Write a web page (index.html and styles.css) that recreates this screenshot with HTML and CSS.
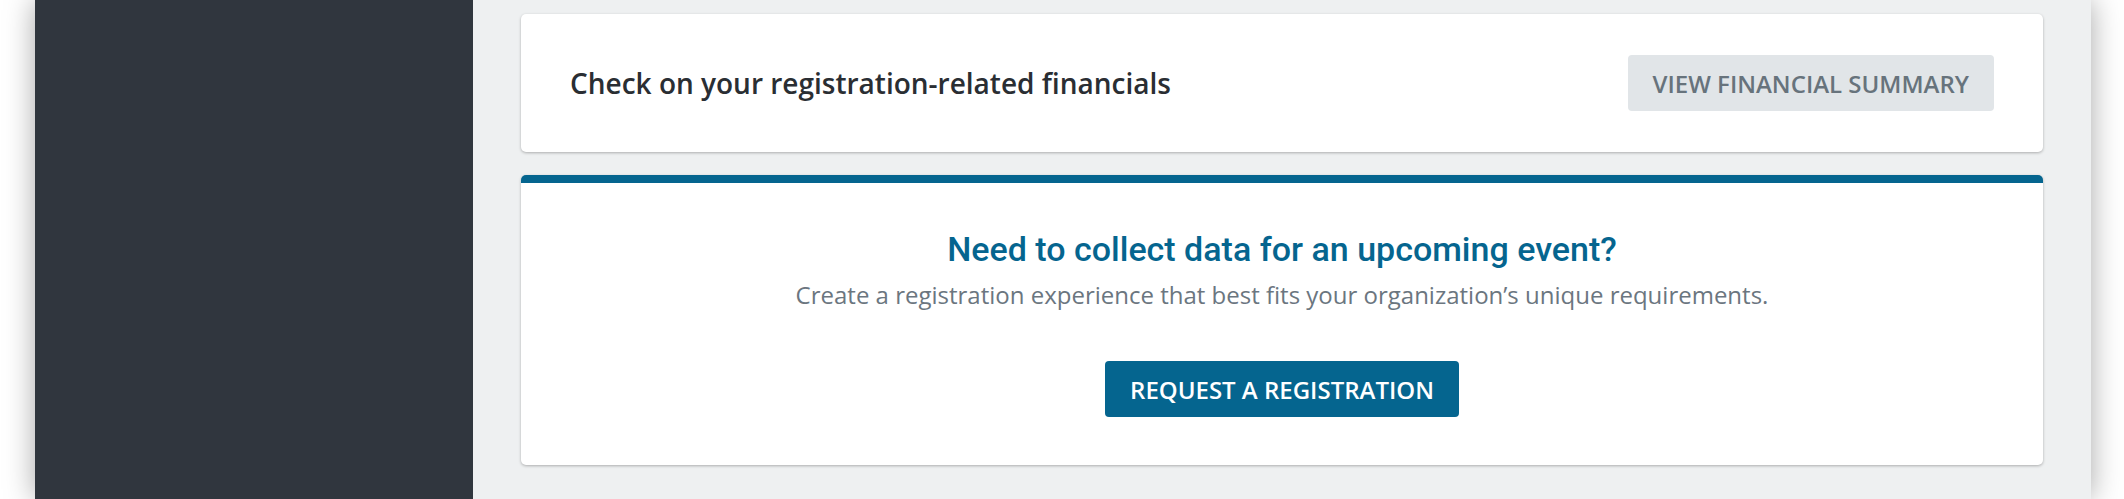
FILE: index.html
```html
<!DOCTYPE html>
<html lang="en">
<head>
<meta charset="utf-8">
<title>Registrations</title>
<link rel="stylesheet" href="styles.css">
</head>
<body>
<div class="frame">
  <aside class="sidebar"></aside>
  <main class="main">
    <section class="card card-row">
      <p class="card-row-text">Check on your registration-related financials</p>
      <button class="btn btn-muted" type="button">VIEW FINANCIAL SUMMARY</button>
    </section>
    <section class="card card-promo">
      <h2 class="promo-title">Need to collect data for an upcoming event?</h2>
      <p class="promo-text">Create a registration experience that best fits your organization’s unique requirements.</p>
      <button class="btn btn-primary" type="button">REQUEST A REGISTRATION</button>
    </section>
  </main>
</div>
</body>
</html>
```

FILE: styles.css
```css
html, body {
  margin: 0;
  padding: 0;
  height: 100%;
  background: #ffffff;
  overflow: hidden;
}

body {
  font-family: "Open Sans", "Noto Sans", sans-serif;
  display: flex;
}

.frame {
  margin-left: 35px;
  width: 2056px;
  height: 100%;
  display: flex;
  box-shadow: 0 0 28px rgba(0, 0, 0, 0.35);
}

.sidebar {
  width: 438px;
  flex: none;
  background: #30363e;
}

.main {
  flex: 1;
  background: #eef0f1;
  padding: 14px 48px;
  display: flex;
  flex-direction: column;
  gap: 23px;
}

.card {
  background: #ffffff;
  border-radius: 5px;
  box-shadow: 0 1px 3px rgba(0, 0, 0, 0.28);
}

.card-row {
  display: flex;
  align-items: center;
  justify-content: space-between;
  padding: 41px 49px 41px 49px;
}

.card-row-text {
  margin: 0;
  font-size: 28px;
  font-weight: 600;
  color: #2a2e33;
}

.btn {
  font-family: "Open Sans", "Noto Sans", sans-serif;
  font-size: 24px;
  font-weight: 600;
  height: 56px;
  border: none;
  border-radius: 4px;
  padding: 0 25px;
  cursor: pointer;
}

.btn-muted {
  background: #e1e5e8;
  color: #67737c;
}

.btn-primary {
  background: #05658f;
  color: #ffffff;
}

.card-promo {
  border-top: 8px solid #05658f;
  padding: 47px 48px 48px;
  display: flex;
  flex-direction: column;
  align-items: center;
  text-align: center;
}

.promo-title {
  margin: 0;
  font-family: Roboto, "Open Sans", sans-serif;
  font-size: 34px;
  font-weight: 500;
  line-height: 38px;
  color: #05658f;
}

.promo-text {
  margin: 10px 0 49px;
  font-size: 24px;
  line-height: 34px;
  color: #6b767f;
}
```
